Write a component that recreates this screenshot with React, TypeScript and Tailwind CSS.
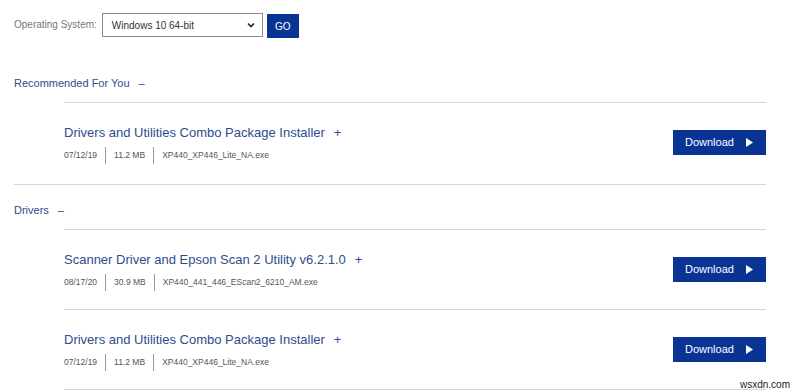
type Download = {
  title: string;
  date: string;
  size: string;
  file: string;
};

const recommended: Download[] = [
  { title: 'Drivers and Utilities Combo Package Installer', date: '07/12/19', size: '11.2 MB', file: 'XP440_XP446_Lite_NA.exe' },
];

const drivers: Download[] = [
  { title: 'Scanner Driver and Epson Scan 2 Utility v6.2.1.0', date: '08/17/20', size: '30.9 MB', file: 'XP440_441_446_EScan2_6210_AM.exe' },
  { title: 'Drivers and Utilities Combo Package Installer', date: '07/12/19', size: '11.2 MB', file: 'XP440_XP446_Lite_NA.exe' },
];

function DownloadRow({ item }: { item: Download }) {
  return (
    <div className="ml-[50px] flex h-[80px] justify-between border-t border-[#d6d6d6]">
      <div className="pt-[21px]">
        <div className="flex items-center text-[13px] leading-[18px] text-[#2e4c8e]">
          <span>{item.title}</span>
          <span className="ml-[9px]">+</span>
        </div>
        <div className="mt-[5px] flex h-[17px] items-center text-[8.5px] text-[#555]">
          <span>{item.date}</span>
          <span className="mx-[8px] h-full w-px bg-[#9a9a9a]" />
          <span>{item.size}</span>
          <span className="mx-[8px] h-full w-px bg-[#9a9a9a]" />
          <span>{item.file}</span>
        </div>
      </div>
      <button className="mt-[27px] flex h-[25px] w-[93px] items-center justify-between bg-[#0a3494] pl-[12px] pr-[13px] text-[11px] text-white">
        <span>Download</span>
        <svg width="7" height="9" viewBox="0 0 7 9">
          <polygon points="0,0 7,4.5 0,9" fill="white" />
        </svg>
      </button>
    </div>
  );
}

function Section({ title, items, first }: { title: string; items: Download[]; first?: boolean }) {
  return (
    <section className={first ? 'mt-[37px] border-b border-[#d6d6d6] pb-[2px]' : 'pt-[17px]'}>
      <h2 className="flex h-[16px] items-center text-[11px] leading-[16px] text-[#2e4c8e]">
        <span>{title}</span>
        <span className="ml-[9px]">–</span>
      </h2>
      <div className="mt-[11px]">
        {items.map((item, i) => (
          <DownloadRow key={i} item={item} />
        ))}
        {!first && <div className="ml-[50px] border-t border-[#d6d6d6]" />}
      </div>
    </section>
  );
}

export default function App() {
  return (
    <div className="relative h-[392px] w-[800px] overflow-hidden bg-white pl-[14px] pr-[34px] pt-[13px] font-['Liberation_Sans',Arial,sans-serif]">
      <div className="flex items-start">
        <label className="mr-[5px] mt-[6px] text-[10px] leading-[12px] text-[#777]">Operating System:</label>
        <div className="flex h-[24px] w-[161px] items-center justify-between border border-[#8a8a8a] bg-white pl-[9px] pr-[7px] text-[10px] text-[#333]">
          <span>Windows 10 64-bit</span>
          <svg width="8" height="6" viewBox="0 0 8 6">
            <polyline points="1,1.5 4,4.5 7,1.5" fill="none" stroke="#222" strokeWidth="1.6" />
          </svg>
        </div>
        <button className="ml-[4px] mt-[1px] flex h-[24px] w-[32px] items-center justify-center bg-[#0a3494] text-[10px] text-white">
          GO
        </button>
      </div>

      <Section title="Recommended For You" items={recommended} first />
      <Section title="Drivers" items={drivers} />

      <span className="absolute bottom-[1px] right-[10px] text-[10px] leading-[12px] text-[#222]">wsxdn.com</span>
    </div>
  );
}
